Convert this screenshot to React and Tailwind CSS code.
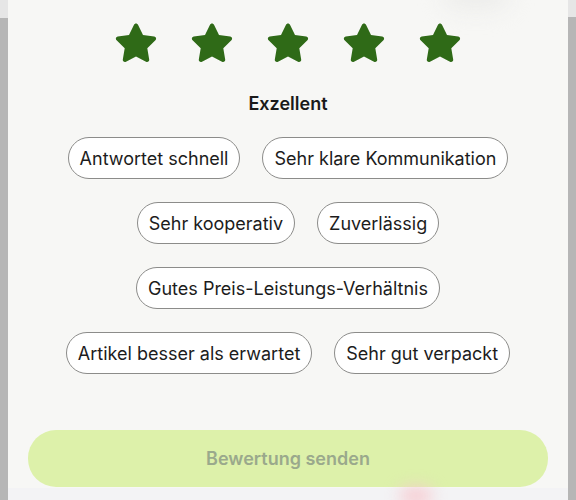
import React from 'react';

const tags = [
  ['Antwortet schnell', 'Sehr klare Kommunikation'],
  ['Sehr kooperativ', 'Zuverlässig'],
  ['Gutes Preis-Leistungs-Verhältnis'],
  ['Artikel besser als erwartet', 'Sehr gut verpackt'],
];

function Star() {
  return (
    <svg width="48" height="46" viewBox="0 0 24 23" fill="#2f6a17">
      <path
        d="M12 1.2c.45 0 .8.3 1 .7l2.5 5.1 5.6.8c.9.15 1.3 1.2.6 1.85l-4.05 3.95.95 5.6c.15.9-.8 1.6-1.6 1.15L12 17.7l-5 2.65c-.8.45-1.75-.25-1.6-1.15l.95-5.6L2.3 9.65c-.7-.65-.3-1.7.6-1.85l5.6-.8L11 1.9c.2-.4.55-.7 1-.7z"
        strokeLinejoin="round"
      />
    </svg>
  );
}

export default function App() {
  return (
    <div
      className="flex h-[500px] w-[576px] overflow-hidden bg-[#f7f7f5]"
      style={{ fontFamily: 'Inter, "Noto Sans", sans-serif' }}
    >
      <div className="flex w-2 flex-col">
        <div className="h-[18px] bg-[#e6e6e6]" />
        <div className="flex-1 bg-[#b6b6b6]" />
      </div>

      <div className="relative flex flex-1 flex-col items-center">
        <div className="absolute -top-5 right-[60px] h-7 w-16 rounded-full bg-[#ebebe9] blur-md" />

        <div className="mt-[21px] flex gap-[28px]">
          {[0, 1, 2, 3, 4].map((i) => (
            <Star key={i} />
          ))}
        </div>

        <div className="mt-[23px] text-[18px] font-semibold text-[#1a1a1a]">
          Exzellent
        </div>

        <div className="mt-[20px] flex flex-col items-center gap-[23px]">
          {tags.map((row, r) => (
            <div key={r} className="flex gap-[22px]">
              {row.map((t) => (
                <div
                  key={t}
                  className="flex h-[42px] items-center rounded-full border border-[#8c8c8a] bg-white px-[11px] text-[18px] text-[#1c1c1c]"
                >
                  {t}
                </div>
              ))}
            </div>
          ))}
        </div>

        <div className="mt-[56px] flex h-[58px] w-[520px] items-center justify-center rounded-[28px] bg-[#ddf1aa] text-[18px] font-semibold text-[#9aa98c]">
          Bewertung senden
        </div>

        <div className="relative mt-[1px] h-[12px] w-full bg-[#f3f3f5]">
          <div className="absolute left-[392px] top-0 h-4 w-8 rounded-full bg-[#f7c9cf] blur-sm" />
        </div>
      </div>

      <div className="flex w-2 flex-col">
        <div className="h-[17px] bg-[#e6e6e6]" />
        <div className="flex-1 bg-[#b6b6b6]" />
      </div>
    </div>
  );
}
